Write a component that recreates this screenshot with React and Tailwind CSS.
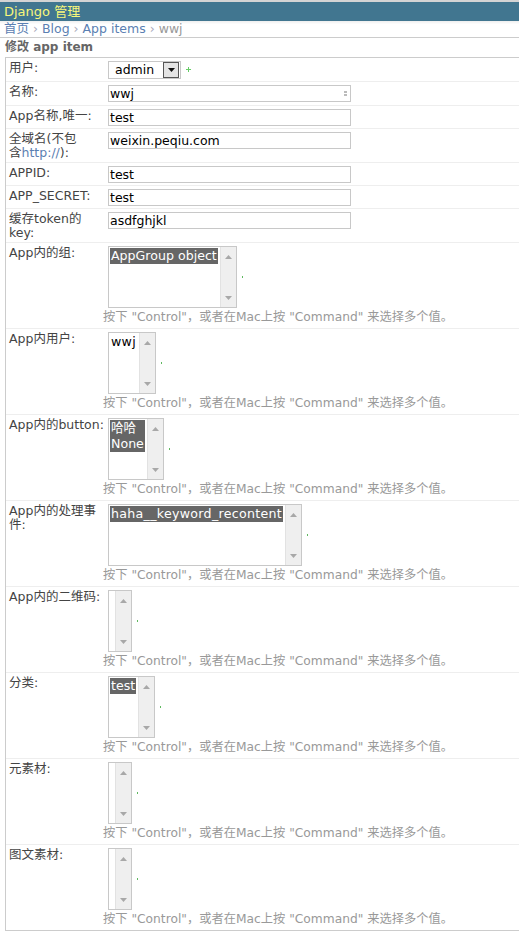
import React from "react";

function Arrow({ up }) {
  return (
    <svg width="7" height="4" viewBox="0 0 7 4" className="block">
      {up ? (
        <polygon points="0,4 7,4 3.5,0" fill="#a8a8a8" />
      ) : (
        <polygon points="0,0 7,0 3.5,4" fill="#a8a8a8" />
      )}
    </svg>
  );
}

function MultiSelect({ options = [], selected = false, wide }) {
  return (
    <div className="flex h-[62px] border border-[#c8c8c8] bg-white">
      <div className="flex min-w-[4px] flex-col items-start pl-[1px] pt-[1px]">
        {options.length > 0 && (
          <div className={selected ? "bg-[#666] text-white" : "text-black"}>
            {options.map((o) => (
              <div
                key={o}
                className={
                  "px-[1px] text-[12.6px] leading-[16px] whitespace-nowrap " +
                  (wide ? "tracking-[0.3px]" : "")
                }
              >
                {o}
              </div>
            ))}
          </div>
        )}
      </div>
      <div className="ml-[2px] flex w-[16px] flex-col items-center justify-between border-l border-[#e2e2e2] bg-[#efefef] pt-[8px] pb-[7px]">
        <Arrow up />
        <Arrow />
      </div>
    </div>
  );
}

function TextBox({ value, icon }) {
  return (
    <div className="relative flex h-[17px] w-[243px] items-center border border-[#c8c8c8] bg-white pl-[1px] text-[12.5px] leading-[15px] text-black">
      {value}
      {icon && (
        <div className="absolute right-[3px] top-[5px] flex flex-col gap-[1px]">
          <div className="h-[2px] w-[3px] bg-[#bbb]" />
          <div className="h-[2px] w-[3px] bg-[#bbb]" />
        </div>
      )}
    </div>
  );
}

function InputRow({ label, value, first, icon, tall }) {
  return (
    <div
      className={
        "flex pl-[3px] pt-[3px] " +
        (first ? "" : "border-t border-[#eee] ") +
        (tall ? "pb-[3px]" : "pb-[2px]")
      }
    >
      <div className="w-[99px] text-[12.5px] leading-[14px] text-[#444]">{label}</div>
      <TextBox value={value} icon={icon} />
    </div>
  );
}

function MultiRow({ label, options, selected, wide }) {
  return (
    <div className="flex flex-col border-t border-[#eee] pl-[3px] pt-[3px] pb-[4px]">
      <div className="flex items-start">
        <div className="w-[99px] text-[12.5px] leading-[14px] text-[#444]">{label}</div>
        <MultiSelect options={options} selected={selected} wide={wide} />
        <div className="ml-[5px] mt-[30px] h-[2px] w-[1px] bg-[#5fb85f]" />
      </div>
      <div className="mt-[2px] pl-[94px] text-[12.25px] leading-[14px] whitespace-nowrap text-[#999]">
        按下 "Control"，或者在Mac上按 "Command" 来选择多个值。
      </div>
    </div>
  );
}

export default function App() {
  return (
    <div className="h-[931px] w-[519px] overflow-hidden bg-white font-['DejaVu_Sans','Noto_Sans_CJK_SC',sans-serif]">
      {/* header */}
      <div className="border-t-2 border-[#d4d4d4]">
        <div className="h-[19px] bg-[#417690] pl-[4px] text-[13px] leading-[19px] text-[#f8f77a]">
          Django 管理
        </div>
      </div>
      {/* breadcrumbs */}
      <div className="h-[17px] border-b border-[#ccc] bg-gradient-to-b from-[#eeeeee] via-white via-[20%] to-white pl-[4px] text-[12.5px] leading-[16px]">
        <span className="text-[#5b80b2]">首页</span>
        <span className="text-[#aab]"> › </span>
        <span className="text-[#5b80b2]">Blog</span>
        <span className="text-[#aab]"> › </span>
        <span className="text-[#5b80b2]">App items</span>
        <span className="text-[#aab]"> › </span>
        <span className="text-[#999]">wwj</span>
      </div>
      {/* title */}
      <div className="h-[19px] pl-[5px] text-[12px] leading-[19px] font-bold text-[#666]">
        修改 app item
      </div>
      {/* fieldset */}
      <div className="ml-[5px] w-[700px] border-t border-l border-b border-[#ccc]">
        {/* 用户 */}
        <div className="flex pl-[3px] pt-[3px] pb-[2px]">
          <div className="w-[99px] text-[12.5px] leading-[14px] text-[#444]">用户:</div>
          <div className="flex h-[18px] w-[73px] items-center border border-[#c8c8c8] bg-white">
            <div className="flex-1 pl-[6px] text-[12.5px] leading-[14px] text-black">admin</div>
            <div className="mr-[1px] flex h-[16px] w-[16px] items-center justify-center border border-[#555] bg-[#e4e4e4]">
              <svg width="7" height="4" viewBox="0 0 7 4">
                <polygon points="0,0 7,0 3.5,4" fill="#111" />
              </svg>
            </div>
          </div>
          <div className="ml-[5px] mt-[6px]">
            <svg width="5" height="5" viewBox="0 0 5 5" className="block">
              <rect x="2" y="0" width="1" height="5" fill="#6c6" />
              <rect x="0" y="2" width="5" height="1" fill="#6c6" />
            </svg>
          </div>
        </div>
        <InputRow label="名称:" value="wwj" icon tall />
        <InputRow label="App名称,唯一:" value="test" />
        <InputRow
          label={
            <>
              全域名(不包
              <br />
              含<span className="text-[#5b80b2]">http://</span>):
            </>
          }
          value="weixin.peqiu.com"
        />
        <InputRow label="APPID:" value="test" />
        <InputRow label="APP_SECRET:" value="test" />
        <InputRow
          label={
            <>
              缓存token的
              <br />
              key:
            </>
          }
          value="asdfghjkl"
        />
        <MultiRow label="App内的组:" options={["AppGroup object"]} selected />
        <MultiRow label="App内用户:" options={["wwj"]} wide />
        <MultiRow label="App内的button:" options={["哈哈", "None"]} selected />
        <MultiRow
          label={
            <>
              App内的处理事
              <br />
              件:
            </>
          }
          options={["haha__keyword_recontent"]}
          selected
          wide
        />
        <MultiRow label="App内的二维码:" options={[]} />
        <MultiRow label="分类:" options={["test"]} selected />
        <MultiRow label="元素材:" options={[]} />
        <MultiRow label="图文素材:" options={[]} />
      </div>
    </div>
  );
}
